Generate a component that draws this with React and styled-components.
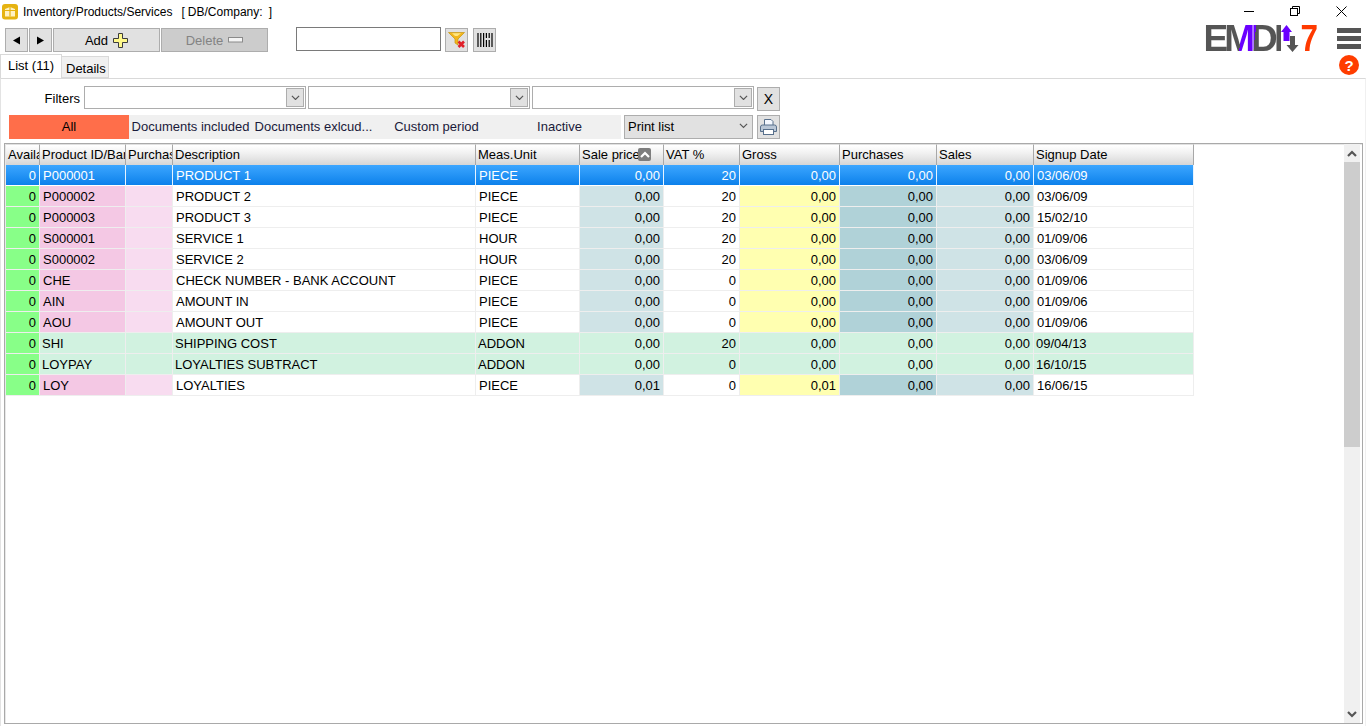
import React from 'react'
import styled, { createGlobalStyle } from 'styled-components'

const GlobalStyle = createGlobalStyle`
  html, body { margin: 0; padding: 0; background: #fff; }
  body { font-family: "Liberation Sans", Arial, sans-serif; font-size: 12px; color: #000; overflow: hidden; }
`

const columns = '34px 86px 47px 303px 104px 84px 76px 100px 97px 97px 160px'

const headers = [
  { label: 'Available' },
  { label: 'Product ID/Barcode' },
  { label: 'Purchase price' },
  { label: 'Description' },
  { label: 'Meas.Unit' },
  { label: 'Sale price', sorted: true },
  { label: 'VAT %' },
  { label: 'Gross' },
  { label: 'Purchases' },
  { label: 'Sales' },
  { label: 'Signup Date' },
]

const products = [
  { id: 'P000001', desc: 'PRODUCT 1', unit: 'PIECE', sale: '0,00', vat: '20', gross: '0,00', date: '03/06/09', selected: true },
  { id: 'P000002', desc: 'PRODUCT 2', unit: 'PIECE', sale: '0,00', vat: '20', gross: '0,00', date: '03/06/09' },
  { id: 'P000003', desc: 'PRODUCT 3', unit: 'PIECE', sale: '0,00', vat: '20', gross: '0,00', date: '15/02/10' },
  { id: 'S000001', desc: 'SERVICE 1', unit: 'HOUR', sale: '0,00', vat: '20', gross: '0,00', date: '01/09/06' },
  { id: 'S000002', desc: 'SERVICE 2', unit: 'HOUR', sale: '0,00', vat: '20', gross: '0,00', date: '03/06/09' },
  { id: 'CHE', desc: 'CHECK NUMBER - BANK ACCOUNT', unit: 'PIECE', sale: '0,00', vat: '0', gross: '0,00', date: '01/09/06' },
  { id: 'AIN', desc: 'AMOUNT IN', unit: 'PIECE', sale: '0,00', vat: '0', gross: '0,00', date: '01/09/06' },
  { id: 'AOU', desc: 'AMOUNT OUT', unit: 'PIECE', sale: '0,00', vat: '0', gross: '0,00', date: '01/09/06' },
  { id: 'SHI', desc: 'SHIPPING COST', unit: 'ADDON', sale: '0,00', vat: '20', gross: '0,00', date: '09/04/13', addon: true },
  { id: 'LOYPAY', desc: 'LOYALTIES SUBTRACT', unit: 'ADDON', sale: '0,00', vat: '0', gross: '0,00', date: '16/10/15', addon: true },
  { id: 'LOY', desc: 'LOYALTIES', unit: 'PIECE', sale: '0,01', vat: '0', gross: '0,01', date: '16/06/15' },
]

const Page = styled.div`
  width: 1366px;
  height: 726px;
  display: flex;
  flex-direction: column;
  overflow: hidden;
`

const Top = styled.div`
  height: 78px;
  display: flex;
  justify-content: space-between;
  flex-shrink: 0;
`

const TopLeft = styled.div`
  display: flex;
  flex-direction: column;
`

const TitleRow = styled.div`
  height: 27px;
  display: flex;
  align-items: flex-start;
  padding: 4px 0 0 2px;
  box-sizing: border-box;
  gap: 5px;
`

const TitleText = styled.span`
  font-size: 12px;
  line-height: 16px;
  white-space: pre;
  word-spacing: -0.3px;
`

const Toolbar = styled.div`
  height: 25px;
  display: flex;
  align-items: flex-start;
  padding-left: 5px;
`

const Btn = styled.div`
  box-sizing: border-box;
  width: ${p => p.$w || 23}px;
  height: 24px;
  margin-top: ${p => p.$top ?? 1}px;
  margin-left: ${p => p.$ml || 0}px;
  border: 1px solid #adadad;
  background: ${p => (p.$disabled ? '#cccccc' : '#e1e1e1')};
  color: ${p => (p.$disabled ? '#838383' : '#000')};
  display: flex;
  align-items: center;
  justify-content: center;
  gap: 5px;
  font-size: 13px;
  flex-shrink: 0;
`

const SearchInput = styled.div`
  box-sizing: border-box;
  width: 145px;
  height: 24px;
  margin-left: 28px;
  border: 1px solid #7a7a7a;
  background: #fff;
`

const Tabs = styled.div`
  display: flex;
  align-items: flex-end;
  height: 26px;
  margin-bottom: -1px;
  position: relative;
`

const Tab = styled.div`
  box-sizing: border-box;
  height: ${p => (p.$active ? 24 : 22)}px;
  width: ${p => (p.$active ? 62 : 48)}px;
  margin-left: ${p => (p.$active ? 0 : -1)}px;
  padding: ${p => (p.$active ? '3px 0 0 7px' : '4px 0 0 4px')};
  border: 1px solid #d9d9d9;
  border-bottom: ${p => (p.$active ? '0' : '1px solid #d9d9d9')};
  background: ${p => (p.$active ? '#fff' : '#f0f0f0')};
  font-size: 13px;
  line-height: 16px;
  white-space: nowrap;
  z-index: ${p => (p.$active ? 1 : 0)};
`

const TopRight = styled.div`
  display: flex;
  flex-direction: column;
  align-items: flex-end;
`

const Caption = styled.div`
  display: flex;
  height: 22px;
  padding-right: 2px;
`

const CaptionBtn = styled.div`
  width: 46px;
  display: flex;
  align-items: center;
  justify-content: center;
`

const BrandRow = styled.div`
  display: flex;
  align-items: flex-start;
  height: 33px;
  padding-right: 5px;
`

const Logo = styled.div`
  display: flex;
  align-items: flex-start;
  height: 31px;
  margin: 3px 17px 0 0;
  font-weight: 700;
  font-size: 37px;
  line-height: 27px;
`

const LogoWord = styled.span`
  width: 78px;
  letter-spacing: -3.9px;
  background: linear-gradient(97deg, #555 0 39px, #6a00ff 39px 53px, #555 53px);
  -webkit-background-clip: text;
  background-clip: text;
  color: transparent;
`

const LogoSeven = styled.span`
  display: inline-block;
  color: #ff3a00;
  margin-left: 0;
  transform: scaleX(0.85);
`

const MenuBars = styled.div`
  margin-top: 6px;
`

const HelpRow = styled.div`
  padding-right: 7px;
  display: flex;
`

const Panel = styled.div`
  flex: 1;
  display: flex;
  flex-direction: column;
  min-height: 0;
  border-top: 1px solid #d9d9d9;
  border-left: 1px solid #e3e3e3;
  border-right: 1px solid #f0f0f0;
  padding: 7px 2px 2px 3px;
`

const FilterRow = styled.div`
  display: flex;
  align-items: flex-start;
  height: 29px;
`

const FilterLabel = styled.div`
  width: 76px;
  text-align: right;
  line-height: 25px;
  font-size: 13px;
  margin-right: 4px;
`

const Combo = styled.div`
  box-sizing: border-box;
  width: 222px;
  height: 23px;
  margin-right: 2px;
  border: 1px solid #adadad;
  background: #fff;
  display: flex;
  justify-content: flex-end;
  padding: 1px;
`

const ComboArrow = styled.div`
  box-sizing: border-box;
  width: 18px;
  border: 1px solid #adadad;
  background: #e1e1e1;
  display: flex;
  align-items: center;
  justify-content: center;
`

const ClearBtn = styled(Btn)`
  margin-left: 1px;
  font-size: 14px;
`

const ModeRow = styled.div`
  display: flex;
  align-items: flex-start;
  height: 28px;
  padding-left: 5px;
`

const ModeStrip = styled.div`
  display: grid;
  grid-template-columns: 120px repeat(4, 123px);
  height: 24px;
  background: #f0f0f0;
  margin-right: 3px;
`

const Mode = styled.div`
  box-sizing: border-box;
  display: flex;
  align-items: center;
  justify-content: center;
  padding-bottom: 2px;
  font-size: 13px;
  white-space: nowrap;
  background: ${p => (p.$on ? '#ff6e4a' : 'transparent')};
  color: ${p => (p.$on ? '#000' : '#1a1a3a')};
`

const PrintSelect = styled.div`
  box-sizing: border-box;
  width: 129px;
  height: 24px;
  border: 1px solid #adadad;
  background: #e1e1e1;
  display: flex;
  align-items: center;
  justify-content: space-between;
  padding: 0 4px 2px 3px;
  font-size: 13px;
  margin-right: 4px;
`

const Frame = styled.div`
  flex: 1;
  min-height: 0;
  display: flex;
  border: 1px solid #a9a9a9;
  box-shadow: inset 1px 1px 0 #e8e8e8;
  padding: 0 2px 0 1px;
`

const GridArea = styled.div`
  flex: 1;
  min-width: 0;
`

const Row = styled.div`
  display: grid;
  grid-template-columns: ${columns};
  width: 1188px;
  height: 21px;
  background: ${p => (p.$selected
    ? 'linear-gradient(180deg, #3ca6ff 0%, #0a7fea 100%)'
    : p.$addon ? '#d1f2e0' : '#fff')};
  color: ${p => (p.$selected ? '#fff' : '#000')};
`

const HeaderRow = styled(Row)`
  background: none;
`

const HeadCell = styled.div`
  position: relative;
  box-sizing: border-box;
  padding-left: 2px;
  font-size: 13px;
  line-height: 19px;
  overflow: hidden;
  white-space: nowrap;
  background: linear-gradient(180deg, #ffffff 0%, #f1f1f1 40%, #d6d6d6 100%);
  border-right: 1px solid #a8a8a8;
  border-top: 1px solid #e0e0e0;
`

const SortBadge = styled.span`
  position: absolute;
  right: 12px;
  top: 3px;
  width: 13px;
  height: 13px;
  border-radius: 2px;
  background: #7d7d7d;
  display: flex;
  align-items: center;
  justify-content: center;
`

const Cell = styled.div`
  box-sizing: border-box;
  height: 21px;
  font-size: 13px;
  line-height: 22px;
  overflow: hidden;
  white-space: nowrap;
  text-align: ${p => (p.$right ? 'right' : 'left')};
  padding: ${p => (p.$right ? '0 3px 0 0' : p.$flat ? '0 0 0 2px' : '0 0 0 3px')};
  background: ${p => p.$bg || 'transparent'};
  border-right: 1px solid ${p => (p.$sel ? '#e6f3ff' : '#eeeeee')};
  border-bottom: 1px solid ${p => (p.$sel ? '#ffffff' : '#eeeeee')};
`

const Scrollbar = styled.div`
  width: 16px;
  flex-shrink: 0;
  background: #f0f0f0;
  display: flex;
  flex-direction: column;
`

const ScrollBtn = styled.div`
  height: 18px;
  display: flex;
  align-items: center;
  justify-content: center;
  flex-shrink: 0;
`

const ScrollThumb = styled.div`
  height: 285px;
  background: #cdcdcd;
  flex-shrink: 0;
`

const ScrollRest = styled.div`
  flex: 1;
`

const AppIcon = () => (
  <svg width="16" height="16" viewBox="0 0 16 16">
    <rect x="0" y="0" width="16" height="15.5" rx="3" fill="#e6b311" />
    <path d="M3 5 L8 3 L13 5 V12.5 H3 Z" fill="#fff2c4" />
    <path d="M3 6.5 H13 M8 3 V12.5" stroke="#e6b311" strokeWidth="1.2" fill="none" />
  </svg>
)

const Triangle = ({ left }) => (
  <svg width="9" height="9" viewBox="0 0 9 9">
    <path d={left ? 'M1 4.5 L8 0.5 V8.5 Z' : 'M8 4.5 L1 0.5 V8.5 Z'} fill="#000" />
  </svg>
)

const PlusIcon = () => (
  <svg width="15" height="15" viewBox="0 0 15 15">
    <path d="M5.5 .5 H9.5 V5.5 H14.5 V9.5 H9.5 V14.5 H5.5 V9.5 H.5 V5.5 H5.5 Z" fill="#fff98c" stroke="#3c3c3c" strokeWidth="1" />
  </svg>
)

const MinusIcon = () => (
  <svg width="15" height="6" viewBox="0 0 15 6">
    <rect x="0.5" y="0.5" width="14" height="4.5" fill="#f4f4f4" stroke="#8a8a8a" />
  </svg>
)

const FunnelIcon = () => (
  <svg width="18" height="18" viewBox="0 0 18 18">
    <path d="M0.5 1.5 H16.5 L10 8 V14 L7 12 V8 Z" fill="#f3b61c" stroke="#c49612" strokeWidth="0.7" />
    <path d="M4 2.2 H13 L9.5 5 H7 Z" fill="#ffe680" />
    <path d="M10.5 10.5 L16 16 M16 10.5 L10.5 16" stroke="#e0202a" strokeWidth="2.6" />
  </svg>
)

const BarcodeIcon = () => (
  <svg width="16" height="14" viewBox="0 0 16 14">
    <path d="M1 0 V14 M3.8 0 V14 M6.6 0 V14 M9.4 0 V5 M9.4 7 V14 M12.2 0 V5 M12.2 7 V14 M15 0 V14" stroke="#000" strokeWidth="1.2" />
  </svg>
)

const Chevron = ({ color = '#555', up, size = 9 }) => (
  <svg width={size} height={size * 0.6} viewBox="0 0 10 6">
    <path d={up ? 'M1 5 L5 1 L9 5' : 'M1 1 L5 5 L9 1'} fill="none" stroke={color} strokeWidth="1.3" />
  </svg>
)

const BoldChevron = ({ up, color = '#555' }) => (
  <svg width="10" height="7" viewBox="0 0 10 7">
    <path d={up ? 'M1 6 L5 2 L9 6' : 'M1 1 L5 5 L9 1'} fill="none" stroke={color} strokeWidth="2.2" />
  </svg>
)

const PrinterIcon = () => (
  <svg width="17" height="16" viewBox="0 0 17 16">
    <path d="M4.5 .5 H11 L13 2.5 V7 H4.5 Z" fill="#f4f8ff" stroke="#58708c" />
    <path d="M.5 8 Q.5 6 2.5 6 H14.5 Q16.5 6 16.5 8 V12.5 H.5 Z" fill="#b9c6d6" stroke="#58708c" />
    <rect x="3.5" y="10.5" width="10" height="5" fill="#fff" stroke="#58708c" />
  </svg>
)

const MinimizeIcon = () => (
  <svg width="10" height="10" viewBox="0 0 10 10">
    <path d="M0 5.5 H10" stroke="#000" strokeWidth="1" />
  </svg>
)

const RestoreIcon = () => (
  <svg width="10" height="10" viewBox="0 0 10 10">
    <path d="M2.5 2.5 V.5 H9.5 V7.5 H7.5" fill="none" stroke="#000" />
    <rect x="0.5" y="2.5" width="7" height="7" fill="none" stroke="#000" />
  </svg>
)

const CloseIcon = () => (
  <svg width="11" height="11" viewBox="0 0 11 11">
    <path d="M.5 .5 L10.5 10.5 M10.5 .5 L.5 10.5" stroke="#000" strokeWidth="1" />
  </svg>
)

const LogoArrows = () => (
  <svg width="18" height="27" viewBox="0 0 18 27">
    <path d="M5.5 0 L11 7 H8.5 V16 H2.5 V7 H0 Z" fill="#6a00ff" />
    <path d="M9 11 H14 V20 H17.5 L11.5 27 L5.5 20 H9 Z" fill="#555" />
  </svg>
)

const MenuIcon = () => (
  <svg width="24" height="21" viewBox="0 0 24 21" display="block">
    <path d="M0 2.5 H24 M0 10.5 H24 M0 18.5 H24" stroke="#555" strokeWidth="5" />
  </svg>
)

const HelpIcon = () => (
  <svg width="20" height="20" viewBox="0 0 20 20">
    <circle cx="10" cy="10" r="10" fill="#ff3d00" />
    <text x="10" y="15.5" textAnchor="middle" fontFamily="Liberation Sans" fontWeight="700" fontSize="15" fill="#fff">?</text>
  </svg>
)

const ProductRow = ({ p }) => {
  const s = p.selected
  const plain = s || p.addon
  return (
    <Row $selected={s} $addon={p.addon}>
      <Cell $right $sel={s} $bg={s ? null : '#88ff88'}>0</Cell>
      <Cell $sel={s} $flat={p.addon} $bg={plain ? null : '#f4c8e4'}>{p.id}</Cell>
      <Cell $sel={s} $bg={plain ? null : '#f8dcf0'} />
      <Cell $sel={s} $flat={p.addon}>{p.desc}</Cell>
      <Cell $sel={s} $flat={p.addon}>{p.unit}</Cell>
      <Cell $right $sel={s} $bg={plain ? null : '#cfe3e6'}>{p.sale}</Cell>
      <Cell $right $sel={s}>{p.vat}</Cell>
      <Cell $right $sel={s} $bg={plain ? null : '#ffffb0'}>{p.gross}</Cell>
      <Cell $right $sel={s} $bg={plain ? null : '#b0d2d8'}>0,00</Cell>
      <Cell $right $sel={s} $bg={plain ? null : '#cfe3e6'}>0,00</Cell>
      <Cell $sel={s} $flat={p.addon}>{p.date}</Cell>
    </Row>
  )
}

export default function App() {
  return (
    <Page>
      <GlobalStyle />
      <Top>
        <TopLeft>
          <TitleRow>
            <AppIcon />
            <TitleText>Inventory/Products/Services   [ DB/Company:  ]</TitleText>
          </TitleRow>
          <Toolbar>
            <Btn><Triangle left /></Btn>
            <Btn $ml={1}><Triangle /></Btn>
            <Btn $w={107} $ml={1}>Add <PlusIcon /></Btn>
            <Btn $w={107} $ml={1} $disabled>Delete <MinusIcon /></Btn>
            <SearchInput />
            <Btn $ml={4}><FunnelIcon /></Btn>
            <Btn $ml={5}><BarcodeIcon /></Btn>
          </Toolbar>
          <Tabs>
            <Tab $active>List (11)</Tab>
            <Tab>Details</Tab>
          </Tabs>
        </TopLeft>
        <TopRight>
          <Caption>
            <CaptionBtn><MinimizeIcon /></CaptionBtn>
            <CaptionBtn><RestoreIcon /></CaptionBtn>
            <CaptionBtn><CloseIcon /></CaptionBtn>
          </Caption>
          <BrandRow>
            <Logo>
              <LogoWord>EMDI</LogoWord>
              <LogoArrows />
              <LogoSeven>7</LogoSeven>
            </Logo>
            <MenuBars><MenuIcon /></MenuBars>
          </BrandRow>
          <HelpRow><HelpIcon /></HelpRow>
        </TopRight>
      </Top>
      <Panel>
        <FilterRow>
          <FilterLabel>Filters</FilterLabel>
          <Combo><ComboArrow><Chevron /></ComboArrow></Combo>
          <Combo><ComboArrow><Chevron /></ComboArrow></Combo>
          <Combo><ComboArrow><Chevron /></ComboArrow></Combo>
          <ClearBtn>X</ClearBtn>
        </FilterRow>
        <ModeRow>
          <ModeStrip>
            <Mode $on>All</Mode>
            <Mode>Documents included</Mode>
            <Mode>Documents exlcud...</Mode>
            <Mode>Custom period</Mode>
            <Mode>Inactive</Mode>
          </ModeStrip>
          <PrintSelect>Print list <Chevron /></PrintSelect>
          <Btn $top={0}><PrinterIcon /></Btn>
        </ModeRow>
        <Frame>
          <GridArea>
            <HeaderRow>
              {headers.map(h => (
                <HeadCell key={h.label}>
                  {h.label}
                  {h.sorted && <SortBadge><BoldChevron color="#fff" up /></SortBadge>}
                </HeadCell>
              ))}
            </HeaderRow>
            {products.map(p => <ProductRow key={p.id} p={p} />)}
          </GridArea>
          <Scrollbar>
            <ScrollBtn><BoldChevron up /></ScrollBtn>
            <ScrollThumb />
            <ScrollRest />
            <ScrollBtn><BoldChevron /></ScrollBtn>
          </Scrollbar>
        </Frame>
      </Panel>
    </Page>
  )
}
